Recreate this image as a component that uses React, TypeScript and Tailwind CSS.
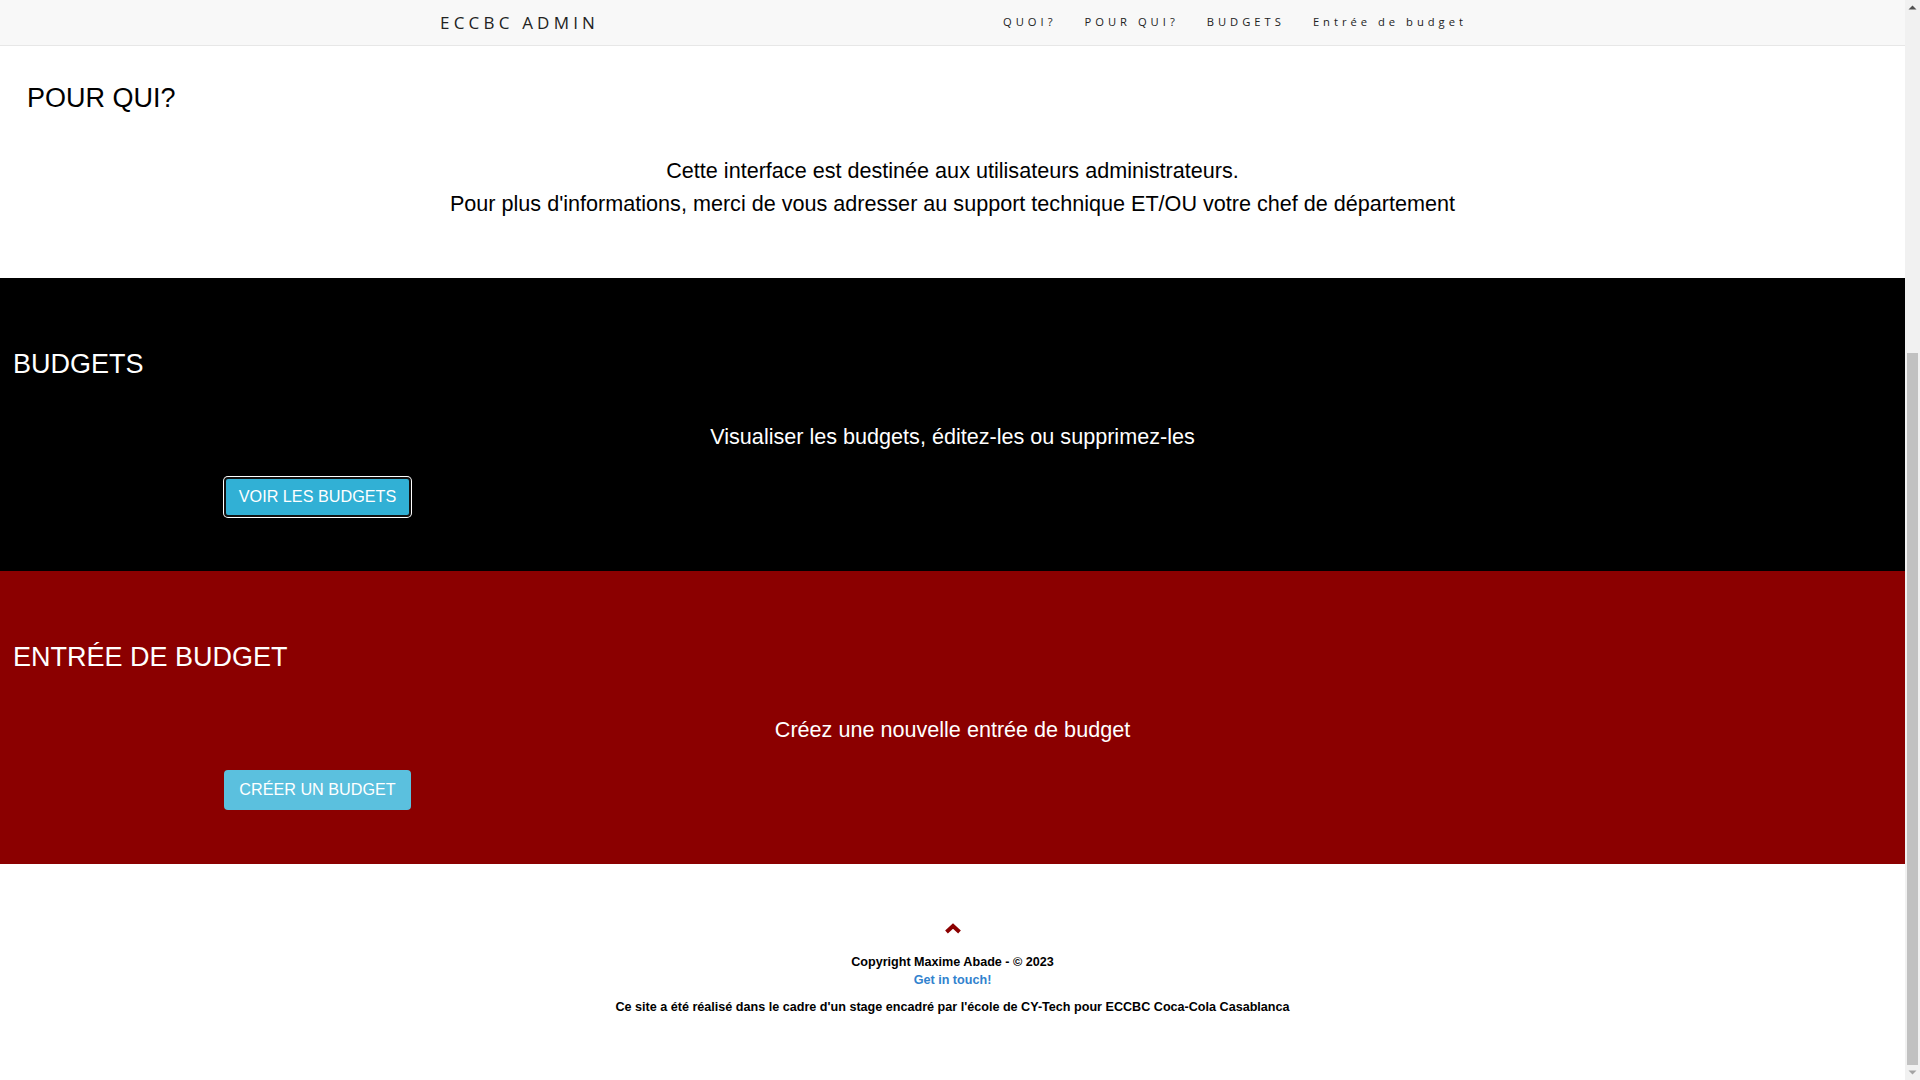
import React from 'react'

const navLinks = ['QUOI?', 'POUR QUI?', 'BUDGETS', 'Entrée de budget']

function NavBar() {
  return (
    <nav className="flex h-[46px] items-center border-b border-[#e7e7e7] bg-[#f8f8f8] font-['Open_Sans',sans-serif] text-[#222]">
      <div className="ml-[440px] w-[563px] text-[17px] tracking-[4.2px] mt-[1px]">ECCBC ADMIN</div>
      <ul className="flex items-center gap-[28px] text-[11.2px] tracking-[4px]">
        {navLinks.map((l) => (
          <li key={l}>{l}</li>
        ))}
      </ul>
    </nav>
  )
}

function Section({
  title,
  text,
  button,
  className,
  titleClass,
  buttonClass,
}: {
  title: string
  text: string
  button: string
  className: string
  titleClass: string
  buttonClass: string
}) {
  return (
    <section className={`h-[293px] pt-[71px] text-white ${className}`}>
      <h2 className={`text-[27px] leading-[30px] ${titleClass}`}>{title}</h2>
      <p className="mt-[41px] text-center text-[21.6px] leading-[33px]">{text}</p>
      <div className="mt-[24px] pl-[224px]">
        <button className={`h-[40px] w-[187px] rounded-[4px] pb-[3px] text-[16.2px] leading-[20px] text-white ${buttonClass}`}>{button}</button>
      </div>
    </section>
  )
}

function Scrollbar() {
  return (
    <div className="flex h-[1080px] w-[15px] flex-col items-center bg-[#f1f1f1]">
      <svg width="15" height="15" viewBox="0 0 15 15">
        <path d="M3.5 9.5 L7.5 5.5 L11.5 9.5 Z" fill="#505050" />
      </svg>
      <div className="mt-[338px] h-[712px] w-[11px] bg-[#c1c1c1]" />
      <svg width="15" height="15" viewBox="0 0 15 15" className="mt-auto">
        <path d="M3.5 5.5 L7.5 9.5 L11.5 5.5 Z" fill="#a3a3a3" />
      </svg>
    </div>
  )
}

export default function App() {
  return (
    <div className="flex h-[1080px] w-[1920px] overflow-hidden bg-white font-['Liberation_Sans',Arial,sans-serif]">
      <div className="w-[1905px]">
        <NavBar />
        <section className="h-[232px] pt-[37px] text-black">
          <h2 className="pl-[27px] text-[27px] leading-[30px]">POUR QUI?</h2>
          <p className="mt-[41px] text-center text-[21.6px] leading-[33px]">
            Cette interface est destinée aux utilisateurs administrateurs.
            <br />
            Pour plus d'informations, merci de vous adresser au support technique ET/OU votre chef de département
          </p>
        </section>
        <Section
          title="BUDGETS"
          text="Visualiser les budgets, éditez-les ou supprimez-les"
          button="VOIR LES BUDGETS"
          className="bg-black"
          titleClass="pl-[13px]"
          buttonClass="bg-[#31b0d5] border-2 border-[#111] shadow-[0_0_0_1px_#fff]"
        />
        <Section
          title="ENTRÉE DE BUDGET"
          text="Créez une nouvelle entrée de budget"
          button="CRÉER UN BUDGET"
          className="bg-[#8b0000]"
          titleClass="pl-[13px]"
          buttonClass="bg-[#5bc0de]"
        />
        <footer className="flex h-[216px] flex-col items-center pt-[59px] text-[12.6px] font-bold text-black">
          <svg width="18" height="11" viewBox="0 0 18 11">
            <path d="M2.5 9 L9 3 L15.5 9" fill="none" stroke="#8b0000" strokeWidth="4" />
          </svg>
          <p className="mt-[19px] leading-[18px]">Copyright Maxime Abade - © 2023</p>
          <a className="leading-[18px] text-[#3182ce]">Get in touch!</a>
          <p className="mt-[9px] leading-[18px]">
            Ce site a été réalisé dans le cadre d'un stage encadré par l'école de CY-Tech pour ECCBC Coca-Cola Casablanca
          </p>
        </footer>
      </div>
      <Scrollbar />
    </div>
  )
}
